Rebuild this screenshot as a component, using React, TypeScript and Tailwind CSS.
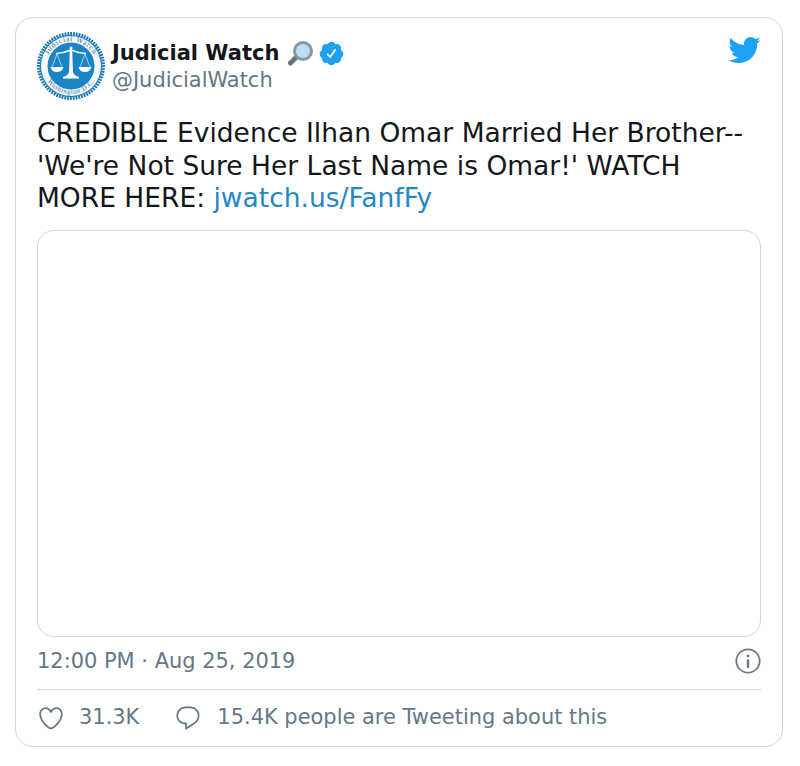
const font = { fontFamily: '"DejaVu Sans", sans-serif' };

function Logo() {
  const teeth = Array.from({ length: 72 }, (_, i) => i * 5);
  return (
    <svg width="70" height="70" viewBox="0 0 70 70" className="shrink-0">
      <circle cx="35" cy="35" r="33.500" fill="#e9f3fa" />
      {teeth.map((a) => (
        <rect key={a} x="34.2" y="1" width="1.8" height="4" fill="#1b78b4" transform={`rotate(${a} 35 35)`} />
      ))}
      <circle cx="35" cy="35" r="30.5" fill="#f4f9fc" stroke="#1b78b4" strokeWidth="1" />
      <circle cx="35" cy="35" r="23.5" fill="#1a85c5" />
      <defs>
        <path id="arcTop" d="M10 35a25 25 0 0 1 50 0" />
        <path id="arcBottom" d="M7 35a28 28 0 0 0 56 0" />
      </defs>
      <text fontSize="7.5" fill="#2a6f9f" fontFamily="Liberation Serif, serif" letterSpacing="0.8">
        <textPath href="#arcTop" startOffset="50%" textAnchor="middle">Judicial Watch</textPath>
      </text>
      <text fontSize="7" fill="#2a6f9f" fontFamily="Liberation Serif, serif" letterSpacing="0.5">
        <textPath href="#arcBottom" startOffset="50%" textAnchor="middle">Washington D.C.</textPath>
      </text>
      <g fill="#fff" stroke="#fff">
        <circle cx="35" cy="17" r="1.5" stroke="none" />
        <path d="M20 22.500 Q28 22 35 19 Q42 22 50 22.500" fill="none" strokeWidth="1.4" />
        <path d="M33.8 19h2.4l.8 23h-4z" stroke="none" />
        <path d="M27 46c3-1 5-2 6-5h4c1 3 3 4 6 5v1.500H27z" stroke="none" />
        <path d="M21 23l-5 13M21 23l5 13M49 23l-5 13M49 23l5 13" fill="none" strokeWidth="0.6" />
        <path d="M14.500 36h13c-1 3.500-3 5-6.500 5s-5.500-1.500-6.500-5zM42.500 36h13c-1 3.500-3 5-6.500 5s-5.500-1.500-6.500-5z" stroke="none" />
      </g>
    </svg>
  );
}

function Magnifier() {
  return (
    <svg width="27" height="27" viewBox="0 0 27 27" className="shrink-0">
      <path d="M10 16.500L3.500 23" stroke="#66757f" strokeWidth="5" strokeLinecap="round" />
      <circle cx="16" cy="11" r="8.500" fill="#bbddf5" stroke="#8a97a0" strokeWidth="3" />
    </svg>
  );
}

export default function App() {
  return (
    <div className="bg-white w-[800px] h-[766px] pt-[17px] pl-[15px]" style={font}>
      <div className="w-[768px] h-[730px] border border-[#ccd6dd] rounded-[18px] pt-[14px] px-[21px] flex flex-col">
        <div className="flex h-[70px]">
          <div className="ml-[-1px] mt-[-1px]"><Logo /></div>
          <div className="ml-[6px] flex-1 pt-[7px]">
            <div className="flex items-center h-[28px]">
              <span className="font-bold text-[21px] text-[#14171a] leading-[28px]">Judicial Watch</span>
              <span className="ml-[8px]"><Magnifier /></span>
              <svg viewBox="0 0 24 24" width="27" height="27" className="ml-[4px] mt-[1px]" fill="#1da1f2">
                <path d="M22.5 12.5c0-1.58-.875-2.95-2.148-3.6.154-.435.238-.905.238-1.4 0-2.21-1.71-3.998-3.818-3.998-.47 0-.92.084-1.336.25C14.818 2.415 13.51 1.5 12 1.5s-2.816.917-3.437 2.25c-.415-.165-.866-.25-1.336-.25-2.11 0-3.818 1.79-3.818 4 0 .494.083.964.237 1.4-1.272.65-2.147 2.018-2.147 3.6 0 1.495.782 2.798 1.942 3.486-.02.17-.032.34-.032.514 0 2.21 1.708 4 3.818 4 .47 0 .92-.086 1.335-.25.62 1.334 1.926 2.25 3.437 2.25 1.512 0 2.818-.916 3.437-2.25.415.163.865.248 1.336.248 2.11 0 3.818-1.79 3.818-4 0-.174-.012-.344-.033-.513 1.158-.687 1.943-1.99 1.943-3.484zm-6.616-3.334l-4.334 6.5c-.145.217-.382.334-.625.334-.143 0-.288-.04-.416-.126l-.115-.094-2.415-2.415c-.293-.293-.293-.768 0-1.06s.768-.294 1.06 0l1.77 1.767 3.825-5.74c.23-.345.696-.436 1.04-.207.346.23.44.696.21 1.04z" />
              </svg>
            </div>
            <div className="text-[20.95px] text-[#657786] leading-[24px] mt-[1px]">@JudicialWatch</div>
          </div>
          <svg viewBox="0 0 24 24" width="34" height="34" fill="#1da1f2" className="mt-[1px] mr-[0px]">
            <path d="M23.643 4.937c-.835.37-1.732.62-2.675.733.962-.576 1.7-1.49 2.048-2.578-.9.534-1.897.922-2.958 1.13-.85-.904-2.06-1.47-3.4-1.47-2.572 0-4.658 2.086-4.658 4.66 0 .364.042.718.12 1.06-3.873-.195-7.304-2.05-9.602-4.868-.4.69-.63 1.49-.63 2.342 0 1.616.823 3.043 2.072 3.878-.764-.025-1.482-.234-2.11-.583v.06c0 2.257 1.605 4.14 3.737 4.568-.392.106-.803.162-1.227.162-.3 0-.593-.028-.877-.082.593 1.85 2.313 3.198 4.352 3.234-1.595 1.25-3.604 1.995-5.786 1.995-.376 0-.747-.022-1.112-.065 2.062 1.323 4.51 2.093 7.14 2.093 8.57 0 13.255-7.098 13.255-13.254 0-.2-.005-.402-.014-.602.91-.658 1.7-1.477 2.323-2.41z" />
          </svg>
        </div>
        <p className="mt-[15px] text-[26.5px] leading-[32.5px] text-[#14171a] whitespace-nowrap">
          CREDIBLE Evidence Ilhan Omar Married Her Brother--<br />
          'We're Not Sure Her Last Name is Omar!' WATCH<br />
          MORE HERE: <span className="text-[#2587c6]">jwatch.us/FanfFy</span>
        </p>
        <div className="mt-[15px] h-[407px] border border-[#ccd6dd] rounded-[17px] shrink-0" />
        <div className="flex items-center justify-between text-[20.95px] text-[#657786] border-b border-[#ccd6dd] h-[53px] pb-[1px]">
          <span>12:00 PM · Aug 25, 2019</span>
          <svg viewBox="0 0 24 24" width="28" height="28" className="mr-[-1px] mb-[2px]">
            <circle cx="12" cy="12" r="10" fill="none" stroke="#657786" strokeWidth="1.500" />
            <path fill="#657786" d="M12 18.042c-.553 0-1-.447-1-1v-5.500c0-.553.447-1 1-1s1 .447 1 1v5.500c0 .553-.447 1-1 1z" />
            <circle cx="12" cy="7.800" r="1.250" fill="#657786" />
          </svg>
        </div>
        <div className="flex items-center h-[56px] text-[20.95px] text-[#657786]">
          <svg viewBox="0 0 24 24" width="28" height="28" fill="#657786">
            <path d="M12 21.638h-.014C9.403 21.59 1.95 14.856 1.95 8.478c0-3.064 2.525-5.754 5.403-5.754 2.29 0 3.83 1.58 4.646 2.73.814-1.148 2.354-2.73 4.645-2.730 2.880 0 5.404 2.690 5.404 5.755 0 6.376-7.454 13.110-10.037 13.157H12zM7.354 4.225c-2.080 0-3.903 1.988-3.903 4.255 0 5.740 7.034 11.596 8.550 11.658 1.518-.062 8.550-5.917 8.550-11.658 0-2.267-1.823-4.255-3.903-4.255-2.528 0-3.940 2.936-3.952 2.965-.230.562-1.156.562-1.387 0-.014-.030-1.425-2.965-3.954-2.965z" />
          </svg>
          <span className="ml-[14px] pt-[1px]">31.3K</span>
          <svg viewBox="0 0 24 24" width="28" height="28" fill="#657786" className="ml-[35px]">
            <path d="M14.046 2.242l-4.148-.010h-.002c-4.374 0-7.800 3.427-7.800 7.802 0 4.098 3.186 7.206 7.465 7.370v3.828c0 .108.044.286.120.403.142.225.384.347.632.347.138 0 .277-.038.402-.118.264-.168 6.473-4.140 8.088-5.506 1.902-1.610 3.040-3.970 3.043-6.312v-.017c-.006-4.367-3.430-7.787-7.800-7.788zm3.787 12.972c-1.134.960-4.862 3.405-6.772 4.643V16.670c0-.414-.335-.750-.750-.750h-.396c-3.660 0-6.318-2.476-6.318-5.886 0-3.534 2.768-6.302 6.300-6.302l4.147.010h.002c3.532 0 6.300 2.766 6.302 6.296-.003 1.910-.942 3.844-2.514 5.176z" />
          </svg>
          <span className="ml-[15px] pt-[1px]">15.4K people are Tweeting about this</span>
        </div>
      </div>
    </div>
  );
}
